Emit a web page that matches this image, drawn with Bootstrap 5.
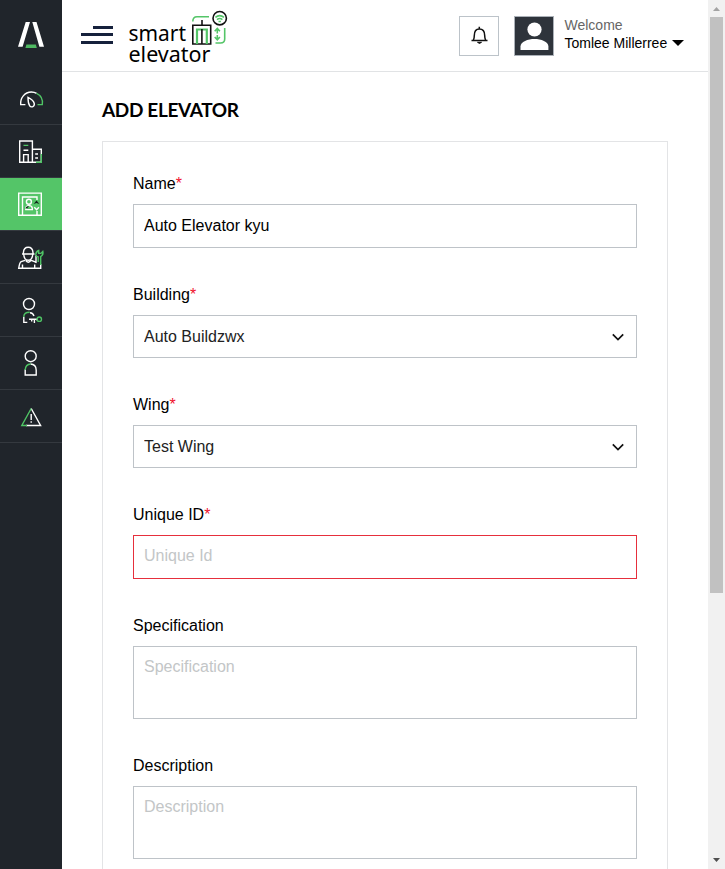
<!DOCTYPE html>
<html lang="en">
<head>
<meta charset="utf-8">
<meta name="viewport" content="width=device-width, initial-scale=1">
<title>Add Elevator</title>
<link rel="stylesheet" href="https://cdn.jsdelivr.net/npm/bootstrap@5.3.0/dist/css/bootstrap.min.css">
<style>
body{font-family:"Liberation Sans",Arial,sans-serif;color:#000;font-size:16px;background:#fff}
.side{width:62px;background:#20252b}
.side a{display:block;height:53px;border-bottom:1px solid #34393f}
.side a.on{background:#54c568;border-color:#34393f}
.side svg,.topbar svg{display:block}
.side .brand{height:72px}
.ln{fill:none;stroke:#fff;stroke-width:1.4}
.gr{stroke:#4fc465}
.topbar{height:72px;border-bottom:1px solid #e1e3e5}
.menu-btn{margin:26px 0 0 19px;width:32px;height:19px}
.logo-art{margin-left:14px}
.logo-art text{font-family:"Noto Sans","Open Sans",sans-serif;font-size:21.5px}
.bell{width:40px;height:40px;border:1px solid #bcc3c9;margin-top:16px}
.avatar{width:40px;height:40px;border:1px solid #abb1b8;background:#2e343b;margin:16px 10px 0 15px}
.who{width:144px;padding-top:16px;padding-left:.5px;font-size:14px;line-height:18px}
.who .hi{color:#666}
.caret{width:12px;height:6px;margin-left:5px}
.page-title{font-family:Lato,sans-serif;font-weight:700;font-size:19px;line-height:24px;letter-spacing:-.35px;margin:26px 0 0 40px;white-space:nowrap}
.panel{margin:19px 40px 0;border:1px solid #e3e4e6;padding:30px;height:800px}
.form-label{line-height:24px;display:block}
.form-label i{font-style:normal;color:#f0122d;line-height:1}
.field{margin-bottom:35px}
.form-control,.form-select{border-radius:0;border-color:#bec3c8;color:#000;font-size:16px;padding:9px 10px;line-height:24px;height:44px;background-color:#fff}
.form-select{height:43px;color:#222;background-image:none;padding-top:8px;padding-bottom:8px}
.pick{position:relative}
.pick svg{position:absolute;right:13px;top:18px}
.form-control::placeholder{color:#c3c6c7;opacity:1}
.form-control.bad{border-color:#e62f3c;padding:8px 10px 10px}
textarea.form-control{height:73px;resize:none;padding-top:8px;overflow:hidden}
.sbar{width:17px;background:#f1f1f1}
.thumb{width:13px;height:576px;background:#c1c1c1}
.sbar svg{display:block}
</style>
<script src="https://cdn.jsdelivr.net/npm/bootstrap@5.3.0/dist/js/bootstrap.bundle.min.js"></script>
</head>
<body>
<div class="d-flex vh-100 overflow-hidden">
<nav class="side flex-shrink-0">
  <div class="brand"><svg width="62" height="72"><path d="M25.7 22H30L22.6 46.7H18zM32.3 22H36.5L44 46.7H39.4z" fill="#fff"/><path d="M26.4 44.6H35.8L36.8 48H25.4z" fill="#4fb862"/></svg></div>
  <a href="#"><svg width="62" height="52" viewBox="0 72 62 52"><g class="ln"><path d="M25.4 104.6H20.7C20.1 98 24.6 92 31.4 92Q34.4 92 36.6 93.4"/><path class="gr" d="M36.6 93.4C41 95.5 43 100 42.3 104.6H37.5"/><path d="M28 97.4Q33.3 100 34.2 103.2C35 106.7 31.4 108 29.6 105.7Q28 103 28 97.4Z"/></g></svg></a>
  <a href="#"><svg width="62" height="52" viewBox="0 125 62 52"><g class="ln"><path d="M32.4 162.3H19.7V141H32.4V162.3H41.3V149.2H32.4"/><path d="M23.6 162V154.6H28.2V162M23.5 150.2H28.3M35.2 154H38M35.2 158H38" /><path class="gr" d="M23.5 145.4H28.3M41.3 154V162.3H36"/></g></svg></a>
  <a href="#" class="on"><svg width="62" height="52" viewBox="0 178 62 52"><g class="ln"><path d="M18.7 193.1H41.3V215.2H18.7Z"/><path d="M22.5 215V197H37V200M37 211V215"/><circle cx="28.9" cy="201.7" r="2.5"/><path d="M25.8 208.5C25.8 204.6 32.3 204.6 32.3 208.5V209.6H25.8Z"/><path d="M34.3 207.2L36.6 209.7L38.9 207.2"/></g><path d="M33.6 204L36.5 200.4L39.4 204L36.5 202.9ZM25.2 208.5Q26 205.6 29 206L27.2 208.3Z" fill="#10251a"/></svg></a>
  <a href="#"><svg width="62" height="52" viewBox="0 231 62 52"><g class="ln"><path d="M23.4 254V252.5Q23.8 247.2 28.2 247.2T33 252.5V254M22 254H34.5M23.7 254Q24 260.3 28.2 260.3T32.8 254M25.4 260.2Q28.3 264.3 31.2 260.2M25 260.4L21.2 261.7Q19.6 262.5 18.7 268.3H40.7V264M31.3 260.4L36 262.2V259M22.5 264.5V268M34.7 264.5V268M36 255.4V263"/><path class="gr" d="M40.7 265V256.6Q43.6 255 42.8 251.4L40.9 253.4H38.7V250.5Q35.5 252 35.8 254.9Q36.4 256.9 38.2 257V262"/></g></svg></a>
  <a href="#"><svg width="62" height="52" viewBox="0 284 62 52"><g class="ln"><circle cx="29" cy="304" r="5.5"/><path d="M27.3 322.4H23.8V317M29 319.2H37V320.6M34.4 319.2V323M31.7 319.2V321.5M30 312.7Q33 313 34 316"/><g class="gr"><path d="M23.8 317Q23.7 312.2 29.7 312.2"/><circle cx="39.3" cy="319.2" r="2.2"/></g></g></svg></a>
  <a href="#"><svg width="62" height="52" viewBox="0 337 62 52"><g class="ln"><circle cx="30.7" cy="356.2" r="5.5"/><path d="M30.5 364Q36 364.2 36.2 370V375H25.2V369.5"/><path class="gr" d="M25.2 370Q25.5 364.2 30.7 364"/></g></svg></a>
  <a href="#"><svg width="62" height="52" viewBox="0 390 62 52"><g class="ln"><path d="M31.2 408.5L40.6 425.5H26"/><path class="gr" d="M31.2 408.5L21.8 425.5H27"/><path d="M31.2 414V420M31.2 421.3V422.8"/></g></svg></a>
</nav>
<main class="flex-grow-1">
  <header class="topbar d-flex align-items-start">
    <a href="#" class="menu-btn"><svg width="32" height="19" fill="#16213c"><path d="M12 0h20v3H12zM0 7h32v3H0zM0 15h32v3H0z"/></svg></a>
    <svg class="logo-art" width="102" height="70" viewBox="127 0 102 70">
      <text x="128.500" y="41" textLength="57.500" lengthAdjust="spacingAndGlyphs">smart</text>
      <text x="128.500" y="61.500" textLength="82" lengthAdjust="spacingAndGlyphs">elevator</text>
      <g fill="none" stroke="#111" stroke-width="1.6"><path d="M192.800 25.300H210.700V44H192.800ZM202 20V25M192 44H211.500"/><path d="M197 44V29.500H206.800V44" stroke="#54c568" stroke-width="2.200"/><path d="M201.900 29V44"/><circle cx="219.700" cy="18.200" r="6.700"/></g>
      <g fill="none" stroke="#54c568" stroke-width="1.600"><path d="M192.800 21.500Q192.800 16.700 197 16.700H209M224.700 28V39Q224.700 43 220.500 43H215.500M217.300 29V33.500M214.700 31.300L217.300 28.500L219.900 31.300M217.300 35V39.700M214.700 37L217.300 39.800L219.900 37"/><path d="M215.400 17.300Q219.700 13.800 224 17.300M217 19.600Q219.700 17.400 222.400 19.600M218.500 21.500H220.900"/></g>
    </svg>
    <div class="bell ms-auto"><svg width="38" height="38" viewBox=".5 0 38 38" fill="none" stroke="#111" stroke-width="1.500"><path d="M12 23.600H28M13.800 23.400Q14.800 21.500 14.800 18.500C14.800 14 16.500 11.900 19.800 11.900S25.200 14 25.200 18.500Q25.200 21.500 26.200 23.400M19.800 9.800V12"/><path d="M18 25.300H22Q20 27.500 18 25.300Z" fill="#111" stroke-width="1"/></svg></div>
    <div class="avatar"><svg width="38" height="38" fill="#fff"><circle cx="19.500" cy="12.500" r="7.100"/><path d="M5.500 33V29.500C5.500 24.500 13 22 19.500 22S33.400 24.500 33.400 29.500V33Z"/></svg></div>
    <div class="who"><div class="hi">Welcome</div><div class="d-flex align-items-center text-nowrap"><span>Tomlee Millerree</span><svg class="caret" viewBox="0 0 12 6"><path d="M0 0H12L6 6Z"/></svg></div></div>
  </header>
  <h1 class="page-title">ADD ELEVATOR</h1>
  <form class="panel">
    <div class="field"><label class="form-label" for="name">Name<i>*</i></label><input id="name" class="form-control" value="Auto Elevator kyu"></div>
    <div class="field"><label class="form-label" for="building">Building<i>*</i></label><div class="pick"><select id="building" class="form-select"><option>Auto Buildzwx</option></select><svg width="12" height="8" fill="none" stroke="#111" stroke-width="1.700"><path d="M.8 1.300L6 6.500L11.200 1.300"/></svg></div></div>
    <div class="field"><label class="form-label" for="wing">Wing<i>*</i></label><div class="pick"><select id="wing" class="form-select"><option>Test Wing</option></select><svg width="12" height="8" fill="none" stroke="#111" stroke-width="1.700"><path d="M.8 1.300L6 6.500L11.200 1.300"/></svg></div></div>
    <div class="field"><label class="form-label" for="uid">Unique ID<i>*</i></label><input id="uid" class="form-control bad" placeholder="Unique Id"></div>
    <div class="field"><label class="form-label" for="spec">Specification</label><textarea id="spec" class="form-control" placeholder="Specification"></textarea></div>
    <div class="field"><label class="form-label" for="desc">Description</label><textarea id="desc" class="form-control" placeholder="Description"></textarea></div>
  </form>
</main>
<div class="sbar flex-shrink-0 d-flex flex-column align-items-center">
  <svg width="17" height="17"><path d="M5 11H12L8.500 7Z" fill="#a3a3a3"/></svg>
  <div class="thumb"></div>
  <svg class="mt-auto" width="17" height="17"><path d="M5 6H12L8.500 10Z" fill="#505050"/></svg>
</div>
</div>
</body>
</html>
